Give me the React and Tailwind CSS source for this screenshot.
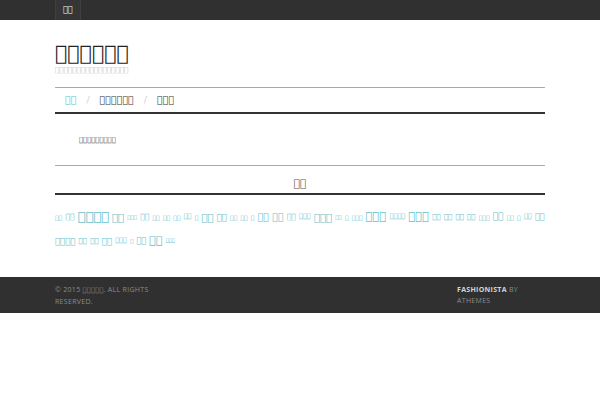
import React from "react";

const T = (n) => "\uFFFF".repeat(n);
const tofu = "font-['DejaVu_Sans',sans-serif]";

const row1 = [
  [2, 6], [2, 7.5], [4, 13], [2, 10], [3, 5.5], [2, 7.5], [2, 6], [2, 6], [2, 6], [2, 6.5], [1, 6],
  [2, 10], [2, 8.5], [2, 6], [2, 6], [1, 6], [2, 9.5], [2, 9.5], [2, 7.5], [3, 6.5], [3, 10],
  [2, 5.5], [1, 6], [3, 6], [3, 11.5], [4, 6.5], [3, 11.5], [2, 7], [2, 7], [2, 7], [2, 7], [3, 6],
  [2, 9], [2, 6], [1, 6], [2, 6.5], [2, 8],
];
const row2 = [[4, 8.5], [2, 7], [2, 7], [2, 8.5], [3, 6.5], [1, 5.5], [2, 8], [2, 11], [3, 5]];

function TagRow({ items }) {
  return (
    <div className="flex h-[24px] items-center gap-x-[3.2px] whitespace-nowrap text-[#66c2cc]">
      {items.map(([n, s], i) => (
        <span key={i} className={tofu} style={{ fontSize: s + "px" }}>
          {T(n)}
        </span>
      ))}
    </div>
  );
}

export default function App() {
  return (
    <div className="min-h-[400px] bg-white font-['Open_Sans',sans-serif]">
      <div className="h-[20px] bg-[#303030]">
        <div className="mx-[55px] flex h-full">
          <div className={`flex h-full items-center border-x border-[#404040] bg-[#363636] px-[7px] text-[8px] text-white ${tofu}`}>
            {T(2)}
          </div>
        </div>
      </div>

      <div className="mx-[55px]">
        <div className={`mt-[21px] text-[20.5px] leading-[24px] text-[#222] ${tofu}`}>{T(6)}</div>
        <div className={`text-[7.2px] leading-[10px] text-[#c0c0c0] ${tofu}`}>{T(17)}</div>

        <div className="mt-[12px] border-t border-[#aaa]" />
        <div className={`flex h-[24px] items-center gap-[10px] pl-[10px] text-[9.5px] text-[#333] ${tofu}`}>
          <span className="text-[#5bbfc9]">{T(2)}</span>
          <span className="text-[#d0d0d0]">/</span>
          <span>{T(6)}</span>
          <span className="text-[#d0d0d0]">/</span>
          <span>{T(3)}</span>
        </div>
        <div className="border-t-2 border-[#333]" />

        <div className={`pl-[24px] pt-[21px] text-[6.8px] leading-[10px] text-[#444] ${tofu}`}>{T(9)}</div>

        <div className="mt-[20px] border-t border-[#aaa]" />
        <div className={`pb-[4px] pt-[11px] text-center text-[10.5px] leading-[12px] text-[#555] ${tofu}`}>
          {T(2)}
        </div>
        <div className="border-t-2 border-[#333]" />

        <div className="pt-[10px]">
          <TagRow items={row1} />
          <TagRow items={row2} />
        </div>
      </div>

      <div className="mt-[24px] h-[36px] bg-[#303030] pt-[7px]">
        <div className="mx-[55px] flex justify-between text-[7px] uppercase leading-[11px] tracking-[0.3px] text-[#8c8c8c]">
          <div className="w-[112px]">
            © 2015 <span className={`${tofu} text-[6.5px]`}>{T(5)}</span>. All rights reserved.
          </div>
          <div className="w-[88px]">
            <span className="font-bold text-[#d4d4d4]">Fashionista</span> by athemes
          </div>
        </div>
      </div>
    </div>
  );
}
